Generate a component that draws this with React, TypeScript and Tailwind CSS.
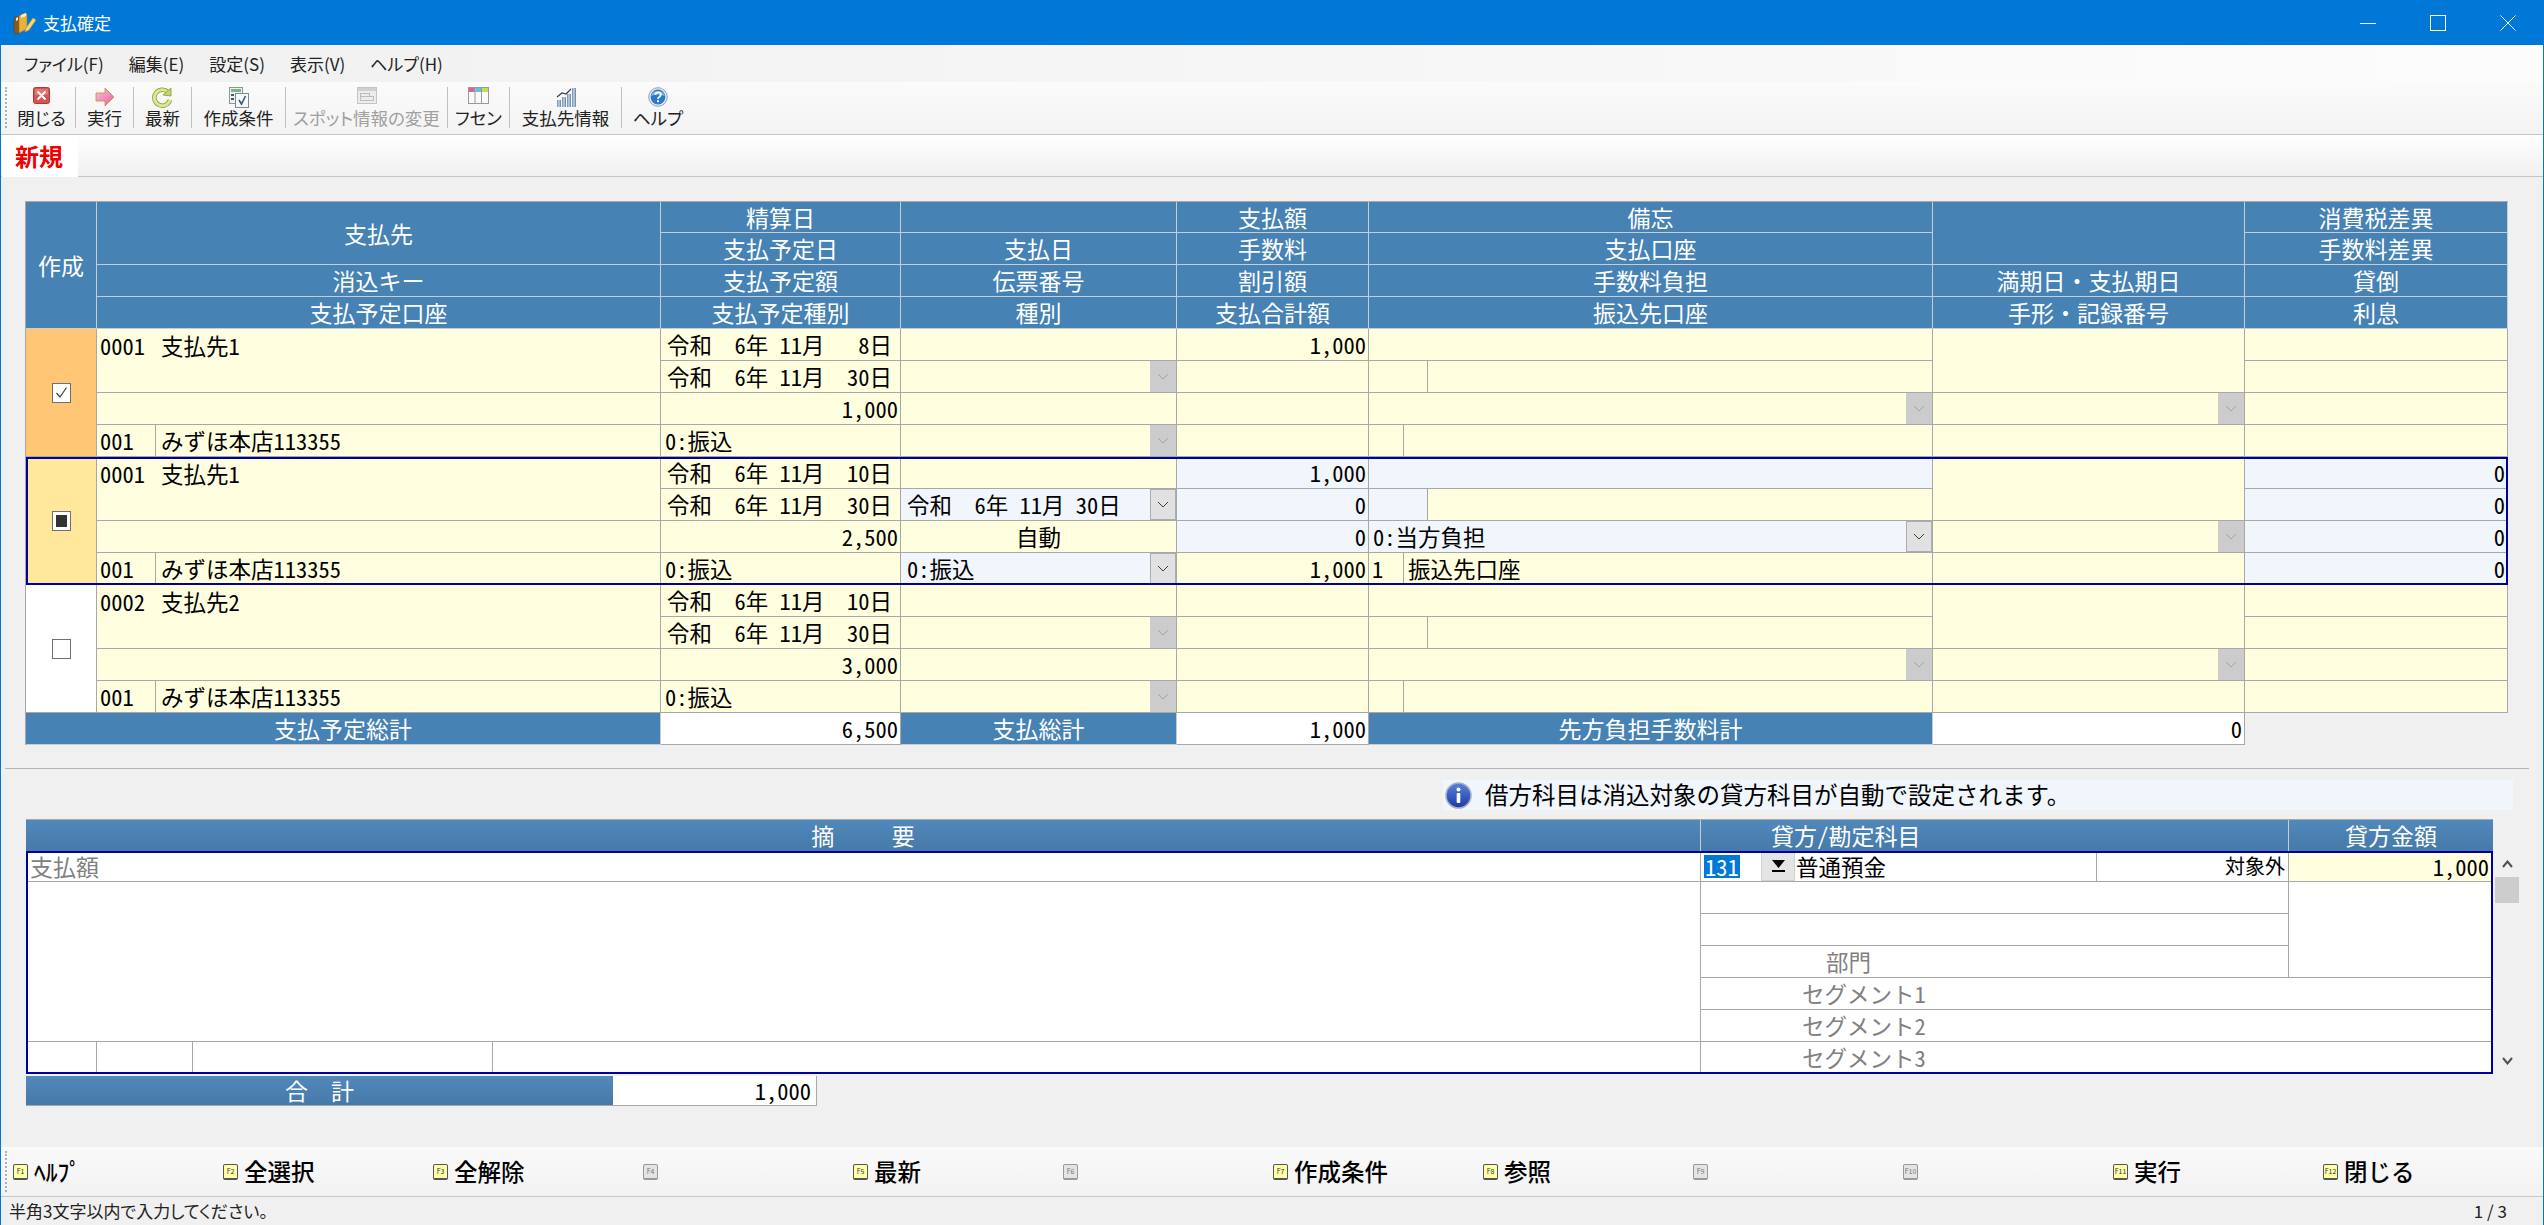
import React from 'react';

const hw = "[font-feature-settings:'hwid']";
const palt = "[font-feature-settings:'palt']";
const gridCols = 'grid grid-cols-[71px_564px_240px_276px_192px_564px_312px_263px]';

const AppIcon = () => (
  <svg width="24" height="24" viewBox="0 0 24 24">
    <path d="M2 7 L7 5 L7 22 L3 23 L2 21 Z" fill="#8a5a20" stroke="#5a3a10" strokeWidth="0.6" />
    <path d="M7 5 L13 2 L15 3 L15 18 L7 22 Z" fill="#e8b040" stroke="#a87820" strokeWidth="0.6" />
    <path d="M4 7 L6 6 L6 9 L4 10 Z" fill="#f4e8d0" />
    <path d="M9 4 L14 2 L14 5 L9 7 Z" fill="#f8ecc8" />
    <path d="M14 17 L21 7 L24 9 L17 19 L13 21 Z" fill="#f6d878" stroke="#b89030" strokeWidth="0.6" />
  </svg>
);

const CloseIcon = () => (
  <svg width="17" height="17" viewBox="0 0 17 17">
    <rect x="0.5" y="0.5" width="16" height="16" rx="2" fill="#d9534f" stroke="#a83a3a" />
    <rect x="2" y="2" width="13" height="6" fill="#f08a84" opacity="0.6" />
    <path d="M4.5 4.5 L12.5 12.5 M12.5 4.5 L4.5 12.5" stroke="#fff" strokeWidth="2" />
  </svg>
);

const ArrowIcon = () => (
  <svg width="20" height="20" viewBox="0 0 20 20">
    <defs>
      <linearGradient id="arrowFill" x1="0" y1="0" x2="1" y2="1">
        <stop offset="0" stopColor="#ffc4dc" />
        <stop offset="1" stopColor="#ea5aa0" />
      </linearGradient>
    </defs>
    <path d="M1 6 L10 6 L10 1 L19 10 L10 19 L10 14 L1 14 Z" fill="url(#arrowFill)" stroke="#c98a3a" strokeWidth="0.8" />
  </svg>
);

const RefreshIcon = () => (
  <svg width="21" height="21" viewBox="0 0 21 21">
    <path d="M16 5 A8 8 0 1 0 18 13" fill="none" stroke="#7a9a3a" strokeWidth="4.4" />
    <path d="M16 5 A8 8 0 1 0 18 13" fill="none" stroke="#dfe88a" strokeWidth="3" />
    <path d="M19 1 L19 9 L11 8 Z" fill="#c8d860" stroke="#7a9a3a" strokeWidth="0.8" />
  </svg>
);

const ConditionIcon = () => (
  <svg width="20" height="21" viewBox="0 0 20 21">
    <rect x="0.5" y="0.5" width="13" height="16" fill="#eef2ee" stroke="#8a9a90" />
    <rect x="2" y="2" width="10" height="3" fill="#7fb08a" />
    <rect x="2" y="7" width="3" height="2" fill="#505a60" />
    <rect x="2" y="11" width="3" height="2" fill="#505a60" />
    <rect x="6.5" y="6.5" width="13" height="14" fill="#f6f8fa" stroke="#7a8a96" />
    <path d="M10 13 L12.5 17 L16.5 9" fill="none" stroke="#3a5a70" strokeWidth="1.6" />
  </svg>
);

const SpotIcon = () => (
  <svg width="20" height="17" viewBox="0 0 20 17">
    <rect x="0.5" y="0.5" width="19" height="16" fill="#ececec" stroke="#c4c4c4" />
    <rect x="1" y="1" width="18" height="3" fill="#d0d0d0" />
    <rect x="3.5" y="6.5" width="9" height="3" fill="none" stroke="#bcbcbc" />
    <rect x="3.5" y="9.5" width="13" height="4" fill="none" stroke="#bcbcbc" />
  </svg>
);

const FusenIcon = () => (
  <svg width="21" height="17" viewBox="0 0 21 17">
    <rect x="0.5" y="0.5" width="20" height="16" fill="#fafafa" stroke="#9a9a9a" />
    <rect x="1" y="1" width="6" height="4" fill="#e0609c" />
    <rect x="7.5" y="1" width="6" height="4" fill="#58c4e4" />
    <rect x="14" y="1" width="6" height="4" fill="#c4dc58" />
    <path d="M7 0.5 V16.5 M13.5 0.5 V16.5" stroke="#9a9a9a" />
  </svg>
);

const ChartIcon = () => (
  <svg width="20" height="20" viewBox="0 0 20 20">
    <defs>
      <linearGradient id="barFill" x1="0" y1="0" x2="1" y2="0">
        <stop offset="0" stopColor="#6a8aa8" />
        <stop offset="0.5" stopColor="#c4d8e8" />
        <stop offset="1" stopColor="#5a7a98" />
      </linearGradient>
    </defs>
    <rect x="1" y="13" width="4" height="7" fill="url(#barFill)" />
    <rect x="6" y="10" width="4" height="10" fill="url(#barFill)" />
    <rect x="11" y="7" width="4" height="13" fill="url(#barFill)" />
    <rect x="16" y="1" width="4" height="19" fill="url(#barFill)" />
    <path d="M1 10 L6 6 L10 7 L15 2" fill="none" stroke="#30404e" strokeWidth="1.2" />
  </svg>
);

const HelpIcon = () => (
  <svg width="20" height="20" viewBox="0 0 20 20">
    <circle cx="10" cy="10" r="9.3" fill="#e4eaf0" stroke="#8aa0b4" />
    <circle cx="10" cy="10" r="7.4" fill="#2a78d0" />
    <path d="M3 9 A7.4 7.4 0 0 1 17 9 Q10 6 3 9 Z" fill="#7ab4ea" />
    <path d="M7.3 7.8 C7.5 4.6 12.8 4.6 12.8 7.8 C12.8 9.8 10 9.8 10 12" fill="none" stroke="#fff" strokeWidth="1.8" />
    <rect x="9" y="13.2" width="2" height="2" fill="#fff" />
  </svg>
);

const InfoIcon = () => (
  <svg width="27" height="27" viewBox="0 0 27 27">
    <defs>
      <linearGradient id="infoFill" x1="0" y1="0" x2="0" y2="1">
        <stop offset="0" stopColor="#5a82d8" />
        <stop offset="1" stopColor="#1a3aa8" />
      </linearGradient>
    </defs>
    <circle cx="13.5" cy="13.5" r="12.5" fill="url(#infoFill)" stroke="#a8b0c0" strokeWidth="1.6" />
    <circle cx="13.5" cy="7.5" r="2" fill="#fff" />
    <rect x="11.7" y="11" width="3.6" height="10" rx="1" fill="#fff" />
  </svg>
);

const Chevron = ({ disabled }: { disabled?: boolean }) => (
  <svg width="12" height="7" viewBox="0 0 12 7">
    <path d="M1 1 L6 6 L11 1" fill="none" stroke={disabled ? '#a4a4a4' : '#404040'} strokeWidth="1" />
  </svg>
);

// 行の右端に付くドロップダウンのボタン
const DropButton = ({ disabled }: { disabled?: boolean }) => (
  <div
    className={
      disabled
        ? 'ml-auto flex h-full w-[26px] shrink-0 items-center justify-center bg-[#cccccc]'
        : 'ml-auto flex h-full w-[26px] shrink-0 items-center justify-center border border-[#adadad] bg-[#e1e1e1]'
    }
  >
    <Chevron disabled={disabled} />
  </div>
);

const Cell = ({ children, className = '' }: { children?: React.ReactNode; className?: string }) => (
  <div className={`flex min-w-0 items-center overflow-hidden border-r border-b border-[#a8a8a8] whitespace-pre ${className}`}>
    {children}
  </div>
);

const Head = ({ children, className = '' }: { children?: React.ReactNode; className?: string }) => (
  <div className={`flex items-center justify-center border-r border-b border-[#c8ccd0] bg-[#4682b4] text-white ${className}`}>
    {children}
  </div>
);

const Check = ({ state }: { state: 'on' | 'mixed' | 'off' }) => (
  <div className="flex h-5 w-[19px] items-center justify-center border border-[#707070] bg-white">
    {state === 'on' && (
      <svg width="13" height="13" viewBox="0 0 13 13">
        <path d="M1.5 7 L5 11 L11.5 1.5" fill="none" stroke="#404040" strokeWidth="1.2" />
      </svg>
    )}
    {state === 'mixed' && <div className="h-3 w-[11px] bg-[#333333]" />}
  </div>
);

type RecordProps = {
  state: 'on' | 'mixed' | 'off';
  checkBg: string;
  code: string;
  name: string;
  date1: string;
  date2: string;
  amount: string;
  active?: boolean;
};

const yellow = 'bg-[#ffffe0]';
const pale = 'bg-[#f1f5fc]';

const PayRecord = ({ state, checkBg, code, name, date1, date2, amount, active }: RecordProps) => {
  const editBg = active ? pale : yellow;
  return (
    <div className={`${gridCols} auto-rows-[32px] ${active ? 'relative z-10 outline-2 -outline-offset-2 outline-[#00009c]' : ''}`}>
      <Cell className={`row-span-4 justify-center ${checkBg}`}>
        <Check state={state} />
      </Cell>
      <Cell className={`row-span-2 items-start pl-[3px] ${yellow}`}>
        <div className="flex h-8 items-center">
          <span className="w-[61px]">{code}</span>
          <span>{name}</span>
        </div>
      </Cell>
      <Cell className={`pl-[6px] ${yellow}`}>{date1}</Cell>
      <Cell className={yellow} />
      <Cell className={`justify-end pr-[2px] ${editBg}`}>{active || date1.includes(' 8') ? '1,000' : ''}</Cell>
      <Cell className={editBg} />
      <Cell className={`row-span-2 ${yellow}`} />
      <Cell className={`justify-end pr-[2px] ${editBg}`}>{active ? '0' : ''}</Cell>

      <Cell className={`pl-[6px] ${yellow}`}>{date2}</Cell>
      <Cell className={`pl-[6px] ${editBg}`}>
        {active ? '令和  6年 11月 30日' : ''}
        <DropButton disabled={!active} />
      </Cell>
      <Cell className={`justify-end pr-[2px] ${editBg}`}>{active ? '0' : ''}</Cell>
      <Cell className={yellow}>
        <div className={`h-full w-[59px] shrink-0 border-r border-[#a8a8a8] ${editBg}`} />
      </Cell>
      <Cell className={`justify-end pr-[2px] ${editBg}`}>{active ? '0' : ''}</Cell>

      <Cell className={yellow} />
      <Cell className={`justify-end pr-[2px] ${yellow}`}>{amount}</Cell>
      <Cell className={`justify-center ${yellow}`}>{active ? '自動' : ''}</Cell>
      <Cell className={`justify-end pr-[2px] ${editBg}`}>{active ? '0' : ''}</Cell>
      <Cell className={`pl-[4px] ${editBg}`}>
        {active ? '0:当方負担' : ''}
        <DropButton disabled={!active} />
      </Cell>
      <Cell className={yellow}>
        <DropButton disabled />
      </Cell>
      <Cell className={`justify-end pr-[2px] ${editBg}`}>{active ? '0' : ''}</Cell>

      <Cell className={yellow}>
        <div className="flex h-full w-[59px] shrink-0 items-center border-r border-[#a8a8a8] pl-[3px]">001</div>
        <span className="pl-[5px]">みずほ本店113355</span>
      </Cell>
      <Cell className={`pl-[4px] ${yellow}`}>0:振込</Cell>
      <Cell className={`pl-[6px] ${editBg}`}>
        {active ? '0:振込' : ''}
        <DropButton disabled={!active} />
      </Cell>
      <Cell className={`justify-end pr-[2px] ${yellow}`}>{active ? '1,000' : ''}</Cell>
      <Cell className={yellow}>
        <div className="flex h-full w-[35px] shrink-0 items-center border-r border-[#a8a8a8] pl-[3px]">{active ? '1' : ''}</div>
        <span className="pl-[4px]">{active ? '振込先口座' : ''}</span>
      </Cell>
      <Cell className={yellow} />
      <Cell className={`justify-end pr-[2px] ${editBg}`}>{active ? '0' : ''}</Cell>
    </div>
  );
};

const tools = [
  { icon: <CloseIcon />, label: '閉じる', w: 'w-[68px]' },
  { icon: <ArrowIcon />, label: '実行', w: 'w-[58px]' },
  { icon: <RefreshIcon />, label: '最新', w: 'w-[58px]' },
  { icon: <ConditionIcon />, label: '作成条件', w: 'w-[94px]' },
  { icon: <SpotIcon />, label: 'スポット情報の変更', w: 'w-[162px]', disabled: true },
  { icon: <FusenIcon />, label: 'フセン', w: 'w-[62px]' },
  { icon: <ChartIcon />, label: '支払先情報', w: 'w-[112px]' },
  { icon: <HelpIcon />, label: 'ヘルプ', w: 'w-[72px]', last: true },
];

const fkeys: { n: string; label: string }[] = [
  { n: 'F1', label: 'ﾍﾙﾌﾟ' },
  { n: 'F2', label: '全選択' },
  { n: 'F3', label: '全解除' },
  { n: 'F4', label: '' },
  { n: 'F5', label: '最新' },
  { n: 'F6', label: '' },
  { n: 'F7', label: '作成条件' },
  { n: 'F8', label: '参照' },
  { n: 'F9', label: '' },
  { n: 'F10', label: '' },
  { n: 'F11', label: '実行' },
  { n: 'F12', label: '閉じる' },
];

const gradHead = 'bg-gradient-to-b from-[#5189bb] to-[#4579a8] text-white';

export default function App() {
  return (
    <div className="flex h-[1225px] w-[2544px] flex-col overflow-hidden border-x border-[#0078d7] bg-[#f0f0f0] font-['Noto_Sans_CJK_JP',sans-serif] text-black">
      {/* Title bar */}
      <div className="flex h-[45px] shrink-0 items-center bg-[#0078d7] pl-[11px] text-[17px] text-white">
        <AppIcon />
        <span className={`ml-[7px] ${palt}`}>支払確定</span>
        <div className="ml-auto flex h-full">
          <div className="flex w-[70px] items-center justify-center">
            <svg width="16" height="16" viewBox="0 0 16 16"><path d="M0 8.5 H16" stroke="#fff" /></svg>
          </div>
          <div className="flex w-[70px] items-center justify-center">
            <svg width="16" height="16" viewBox="0 0 16 16"><rect x="0.5" y="0.5" width="15" height="15" fill="none" stroke="#fff" /></svg>
          </div>
          <div className="flex w-[70px] items-center justify-center">
            <svg width="16" height="16" viewBox="0 0 16 16"><path d="M0.5 0.5 L15.5 15.5 M15.5 0.5 L0.5 15.5" stroke="#fff" /></svg>
          </div>
        </div>
      </div>

      {/* Menu */}
      <div className={`flex h-[37px] shrink-0 items-center gap-[25px] bg-gradient-to-r from-[#f0f0f0] to-[#fcfcfc] pl-[23px] text-[17px] text-[#222222] ${palt}`}>
        <span>ファイル(F)</span>
        <span>編集(E)</span>
        <span>設定(S)</span>
        <span>表示(V)</span>
        <span>ヘルプ(H)</span>
      </div>

      {/* Toolbar */}
      <div className={`flex h-[53px] shrink-0 items-start border-b border-[#c4c4c4] bg-gradient-to-b from-[#fbfbfb] to-[#f3f3f3] pt-[5px] pl-[4px] text-[17.5px] ${palt}`}>
        <div className="mr-px h-[41px] border-l-2 border-dotted border-[#b0b0b0]" />
        {tools.map((t) => (
          <div key={t.label} className={`flex h-[41px] shrink-0 flex-col items-center ${t.w} ${t.last ? '' : 'border-r border-[#c0c0c0]'}`}>
            <div className="flex h-[21px] items-start">{t.icon}</div>
            <div className={`h-5 leading-[20px] whitespace-nowrap ${t.disabled ? 'text-[#a0a0a0]' : 'text-[#222222]'}`}>{t.label}</div>
          </div>
        ))}
      </div>

      {/* Tab strip */}
      <div className="flex h-[42px] shrink-0 border-b border-[#c4c4c4] bg-gradient-to-b from-white to-[#f0f0f0] pl-px">
        <div className="-mb-px flex h-[42px] w-[76px] items-center bg-white pl-[13px] text-[24px] font-bold text-[#ee0000]">新規</div>
      </div>

      {/* Upper grid */}
      <div className={`mt-[24px] ml-[24px] w-[2483px] shrink-0 border-t border-l border-[#a8a8a8] text-[22.5px] leading-none ${hw}`}>
        <div className={`${gridCols} grid-rows-[31px_32px_32px_32px] text-[23px]`}>
          <Head className="row-span-4">作成</Head>
          <Head className="row-span-2">支払先</Head>
          <Head>精算日</Head>
          <Head />
          <Head>支払額</Head>
          <Head>備忘</Head>
          <Head className="row-span-2" />
          <Head>消費税差異</Head>
          <Head>支払予定日</Head>
          <Head>支払日</Head>
          <Head>手数料</Head>
          <Head>支払口座</Head>
          <Head>手数料差異</Head>
          <Head>消込キー</Head>
          <Head>支払予定額</Head>
          <Head>伝票番号</Head>
          <Head>割引額</Head>
          <Head>手数料負担</Head>
          <Head>満期日・支払期日</Head>
          <Head>貸倒</Head>
          <Head>支払予定口座</Head>
          <Head>支払予定種別</Head>
          <Head>種別</Head>
          <Head>支払合計額</Head>
          <Head>振込先口座</Head>
          <Head>手形・記録番号</Head>
          <Head>利息</Head>
        </div>
        <PayRecord state="on" checkBg="bg-[#ffc675]" code="0001" name="支払先１" date1="令和  6年 11月   8日" date2="令和  6年 11月  30日" amount="1,000" />
        <PayRecord state="mixed" checkBg="bg-[#ffe89c]" code="0001" name="支払先１" date1="令和  6年 11月  10日" date2="令和  6年 11月  30日" amount="2,500" active />
        <PayRecord state="off" checkBg="bg-white" code="0002" name="支払先２" date1="令和  6年 11月  10日" date2="令和  6年 11月  30日" amount="3,000" />

        {/* Totals */}
        <div className={`${gridCols} h-8`}>
          <Head className="col-span-2 text-[23px]">支払予定総計</Head>
          <Cell className="justify-end bg-white pr-[2px]">6,500</Cell>
          <Head className="text-[23px]">支払総計</Head>
          <Cell className="justify-end bg-white pr-[2px]">1,000</Cell>
          <Head className="text-[23px]">先方負担手数料計</Head>
          <Cell className="justify-end bg-white pr-[2px]">0</Cell>
        </div>
      </div>

      <div className="mt-[23px] ml-[4px] w-[2524px] shrink-0 border-t border-[#b4b4b4]" />

      {/* Info message */}
      <div className="mt-[11px] ml-[1442px] flex h-[30px] w-[1070px] shrink-0 items-center bg-[#f1f5fc] pl-[2px] text-[23.5px] leading-none">
        <InfoIcon />
        <span className="ml-[13px]">借方科目は消込対象の貸方科目が自動で設定されます。</span>
      </div>

      {/* Lower grid */}
      <div className={`mt-[9px] ml-[25px] w-[2467px] shrink-0 border-t border-[#a8a8a8] text-[23px] leading-none ${hw}`}>
        <div className="grid h-[31px] grid-cols-[1675px_588px_204px]">
          <div className={`flex items-center justify-center border-r border-[#c8ccd0] ${gradHead}`}>摘　　　　　要</div>
          <div className={`flex items-center border-r border-[#c8ccd0] pl-[70px] ${gradHead}`}>貸方／勘定科目</div>
          <div className={`flex items-center justify-center ${gradHead}`}>貸方金額</div>
        </div>
      </div>

      <div className={`ml-[25px] flex h-[223px] shrink-0 text-[22.5px] leading-none ${hw}`}>
        <div className="relative z-10 grid w-[2467px] grid-cols-[1675px_396px_192px_204px] grid-rows-[31px_repeat(6,32px)] bg-white outline-2 -outline-offset-2 outline-[#00009c]">
          <Cell className="pl-[4px] text-[23px] text-[#808080]">支払額</Cell>
          <Cell>
            <span className="ml-[3px] flex h-[23px] w-[36px] shrink-0 items-center bg-[#0078d7] pl-px text-white">131</span>
            <div className="ml-[21px] flex h-full w-[34px] shrink-0 flex-col items-center justify-center gap-[2px] border border-[#cfcfcf] bg-[#e4e4e4]">
              <svg width="13" height="8" viewBox="0 0 13 8"><path d="M0 0 H13 L6.5 8 Z" fill="#000" /></svg>
              <div className="h-[2px] w-[13px] bg-black" />
            </div>
            <span className="pl-[1px]">普通預金</span>
          </Cell>
          <Cell className={`justify-end pr-[3px] text-[20px] ${palt}`}>対象外</Cell>
          <Cell className="justify-end bg-[#ffffe0] pr-[3px]">1,000</Cell>

          <Cell className="row-span-5" />
          <Cell className="col-span-2" />
          <Cell className="row-span-3" />
          <Cell className="col-span-2" />
          <Cell className="col-span-2 pl-[125px] text-[#808080]">部門</Cell>
          <Cell className="col-span-3 pl-[101px] text-[#808080]">セグメント１</Cell>
          <Cell className="col-span-3 pl-[101px] text-[#808080]">セグメント２</Cell>
          <Cell>
            <div className="h-full w-[71px] shrink-0 border-r border-[#a8a8a8]" />
            <div className="h-full w-[96px] shrink-0 border-r border-[#a8a8a8]" />
            <div className="h-full w-[300px] shrink-0 border-r border-[#a8a8a8]" />
          </Cell>
          <Cell className="col-span-3 pl-[101px] text-[#808080]">セグメント３</Cell>
        </div>

        {/* Scrollbar */}
        <div className="ml-[2px] flex w-[24px] flex-col">
          <div className="flex h-[26px] items-center justify-center">
            <svg width="11" height="8" viewBox="0 0 11 8"><path d="M1 7 L5.5 1.5 L10 7" fill="none" stroke="#505050" strokeWidth="2" /></svg>
          </div>
          <div className="h-[26px] bg-[#cdcdcd]" />
          <div className="flex-1" />
          <div className="flex h-[26px] items-center justify-center">
            <svg width="11" height="8" viewBox="0 0 11 8"><path d="M1 1 L5.5 6.5 L10 1" fill="none" stroke="#505050" strokeWidth="2" /></svg>
          </div>
        </div>
      </div>

      {/* Sum */}
      <div className={`mt-[2px] ml-[25px] grid h-[30px] w-[791px] shrink-0 grid-cols-[587px_204px] border-b border-[#a8a8a8] text-[23px] leading-none ${hw}`}>
        <div className={`flex items-center justify-center ${gradHead}`}>合　　計</div>
        <div className="flex items-center justify-end border-r border-[#a8a8a8] bg-white pr-[5px] text-[22.5px]">1,000</div>
      </div>

      {/* Function keys */}
      <div className="mt-[41px] flex h-[50px] shrink-0 border-b border-[#c8c8c8] bg-gradient-to-b from-[#fafafa] to-[#f2f2f2] pl-[4px]">
        <div className="my-[4px] border-l-2 border-dotted border-[#b0b0b0]" />
        <div className="grid w-[2520px] grid-cols-12">
          {fkeys.map((k) => (
            <div key={k.n} className="flex items-center pl-[6px]">
              <div
                className={
                  k.label
                    ? 'flex h-4 w-[15px] items-center justify-center rounded-[2px] border border-b-2 border-[#555555] bg-[#ffffa8] text-[7px] leading-none text-[#333333]'
                    : 'flex h-4 w-[15px] items-center justify-center rounded-[2px] border border-b-2 border-[#999999] bg-[#e4e4e4] text-[7px] leading-none text-[#777777]'
                }
              >
                {k.n}
              </div>
              <span className="ml-[6px] text-[23.5px] leading-none font-medium">{k.label}</span>
            </div>
          ))}
        </div>
      </div>

      {/* Status bar */}
      <div className={`flex min-h-0 flex-1 items-center pr-[8px] pl-[8px] text-[17px] text-[#222222] ${palt}`}>
        <span>半角3文字以内で入力してください。</span>
        <span className="mr-[28px] ml-auto">1 / 3</span>
      </div>
    </div>
  );
}
